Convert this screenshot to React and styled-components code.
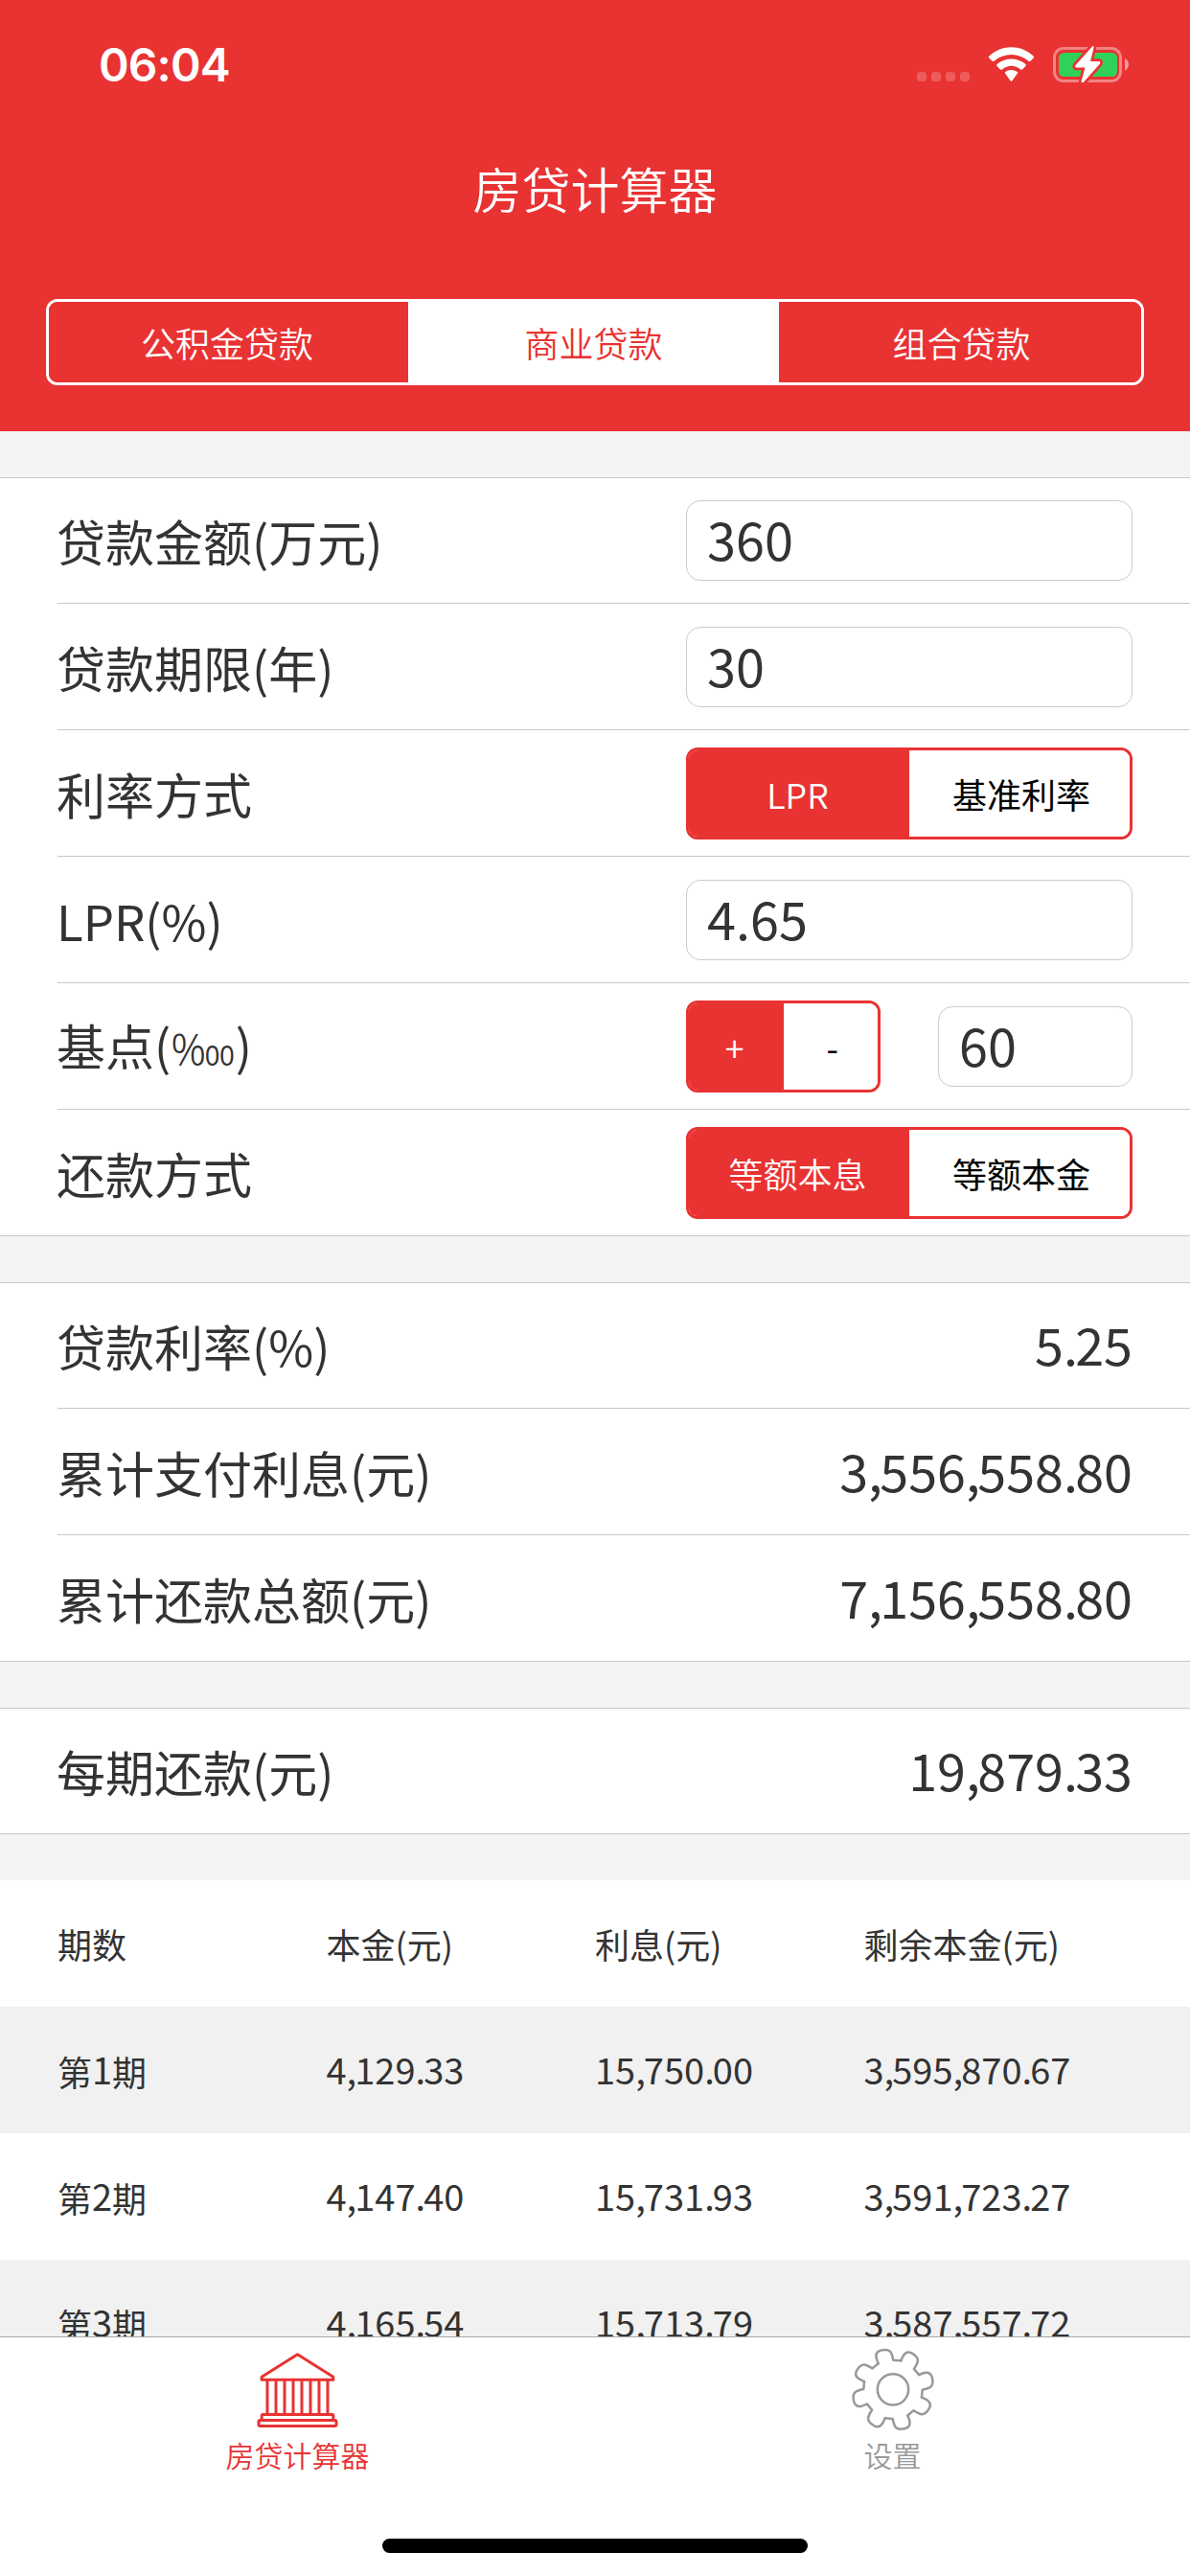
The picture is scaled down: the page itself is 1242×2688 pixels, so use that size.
import React, { useState } from "react";
import styled, { createGlobalStyle } from "styled-components";

const RED = "#e93232";
const LINE = "#c8c8c8";

const GlobalStyle = createGlobalStyle`
  * {
    box-sizing: border-box;
  }
  body {
    margin: 0;
    background: white;
    color: #333;
    font-family: "Noto Sans CJK SC", "Noto Sans", sans-serif;
  }
`;

const Screen = styled.div`
  display: flex;
  flex-direction: column;
  width: 1242px;
  height: 2688px;
  overflow: hidden;
  background: #f4f4f4;
`;
const Header = styled.header`
  display: flex;
  flex-direction: column;
  flex: none;
  height: 450px;
  padding: 0 48px;
  background: ${RED};
  color: white;
`;
const StatusBar = styled.div`
  display: flex;
  justify-content: space-between;
  height: 130px;
  padding: 38px 15px 0 55px;

  & svg {
    margin-top: 4px;
  }
`;
const Time = styled.span`
  font-family: Inter, sans-serif;
  font-size: 48px;
  font-weight: 600;
  line-height: 60px;
  letter-spacing: -0.9px;
`;
const Title = styled.h1`
  margin: 0;
  height: 132px;
  font-size: 51px;
  font-weight: 350;
  line-height: 132px;
  text-align: center;
`;
const LoanTabs = styled.div`
  display: grid;
  grid-template-columns: 375px 387px 1fr;
  height: 90px;
  margin-top: 50px;
  border: 3px solid white;
  border-radius: 12px;
  overflow: hidden;
`;
const LoanTab = styled.button`
  border: 0;
  padding: 0;
  font-family: inherit;
  font-size: 36px;
  font-weight: 350;
  line-height: 84px;
  color: ${(props) => (props.$active ? RED : "white")};
  background: ${(props) => (props.$active ? "white" : RED)};

  &:first-child {
    padding-right: 3px;
  }
  &:last-child {
    padding-left: 3px;
  }
`;
const Content = styled.main`
  flex: 1;
  min-height: 0;
  overflow: hidden;
`;
const Section = styled.section`
  margin-top: 48px;
  padding-left: 60px;
  background: white;
  border-top: 1px solid ${LINE};
  border-bottom: 1px solid ${LINE};
`;
const Row = styled.div`
  display: flex;
  align-items: center;
  justify-content: space-between;
  height: 132px;
  padding-right: 60px;
  border-bottom: 1px solid ${LINE};

  &:first-child {
    height: 131px;
  }
  &:last-child {
    border-bottom: 0;
    height: 131px;
  }
  &:only-child {
    height: 130px;
  }
`;
const Label = styled.span`
  margin-left: -1px;
  font-size: 51px;
  line-height: 76px;
  white-space: nowrap;
`;
const PerMyriad = styled.span`
  font-size: 45px;
  font-weight: 350;
`;
const Value = styled.span`
  font-size: 51px;
  line-height: 76px;
`;
const Controls = styled.div`
  display: grid;
  grid-auto-flow: column;
  grid-auto-columns: minmax(0, 1fr);
  align-items: center;
  gap: 60px;
  width: 466px;
`;
const Input = styled.input`
  width: 100%;
  height: 84px;
  padding: 0 21px 5px;
  border: 1px solid #ccc;
  border-radius: 15px;
  outline: none;
  background: white;
  color: #333;
  font-family: inherit;
  font-size: 54px;
`;
const Segmented = styled.div`
  display: grid;
  grid-template-columns: 1fr 1fr;
  height: 96px;
  border: 3px solid ${RED};
  border-radius: 12px;
  overflow: hidden;
`;
const Segment = styled.button`
  border: 0;
  padding: 0;
  font-family: inherit;
  font-size: 36px;
  font-weight: ${(props) => (props.$active ? 350 : 400)};
  line-height: 90px;
  color: ${(props) => (props.$active ? "white" : "black")};
  background: ${(props) => (props.$active ? RED : "white")};

  &:first-child {
    padding-right: 3px;
  }
  &:last-child {
    padding-left: 4px;
  }
`;
const Digits = styled.span`
  font-size: 1.056em;
  vertical-align: 0.04em;
`;
const Mark = styled.span`
  letter-spacing: -0.05em;
`;
const Table = styled.div`
  margin-top: 48px;
`;
const TableRow = styled.div`
  display: grid;
  grid-template-columns: repeat(4, 1fr);
  align-items: center;
  height: 132px;
  padding: 0 60px;
  background: ${(props) => (props.$striped ? "#f1f1f1" : "white")};
  font-size: 36px;
  line-height: 54px;
  white-space: nowrap;
`;
const TabBar = styled.nav`
  display: flex;
  flex: none;
  flex-direction: column;
  align-items: center;
  height: 250px;
  background: white;
  border-top: 1px solid #a9a9a9;
`;
const TabList = styled.div`
  display: grid;
  grid-template-columns: 1fr 1fr;
  width: 100%;
  padding-top: 10px;
`;
const TabItem = styled.div`
  display: flex;
  flex-direction: column;
  align-items: center;
  color: ${(props) => (props.$active ? RED : "#999")};
  font-size: 30px;
  font-weight: 350;
  line-height: 44px;

  & svg {
    display: block;
  }
`;
const HomeIndicator = styled.div`
  width: 444px;
  height: 15px;
  margin-top: auto;
  margin-bottom: 24px;
  border-radius: 8px;
  background: black;
`;

// Digits are set a little larger than the Chinese text, with tight separators
const Num = ({ children }) => (
  <Digits>
    {String(children)
      .split(/([.,])/)
      .map((part, i) =>
        part === "." || part === "," ? <Mark key={i}>{part}</Mark> : part
      )}
  </Digits>
);

const StatusIcons = () => (
  <svg width="225" height="50" viewBox="954 42 225 50">
    {[957, 972, 987, 1002].map((x) => (
      <rect key={x} x={x} y="75" width="10" height="10" rx="3.3" fill="white" opacity="0.2" />
    ))}
    <g fill="white">
      <path d="M1032.3 58.6 C1045.5 46 1065.5 46 1078.7 58.6 Q1079.6 59.6 1078.7 60.5 L1075.4 63.7 Q1074.5 64.6 1073.5 63.7 C1063 54.6 1048 54.6 1037.5 63.7 Q1036.5 64.6 1035.6 63.7 L1032.3 60.5 Q1031.4 59.6 1032.3 58.6Z" />
      <path d="M1040.6 67 C1049 59.6 1062 59.6 1070.4 67 Q1071.4 68 1070.4 69 L1067 72.4 Q1066 73.3 1065 72.4 C1059.5 67.6 1051.5 67.6 1046 72.4 Q1045 73.3 1044 72.4 L1040.6 69 Q1039.6 68 1040.6 67Z" />
      <path d="M1049 76.6 Q1048.2 75.7 1049.2 75 C1053 72.2 1058 72.2 1061.8 75 Q1062.8 75.7 1062 76.6 L1056.4 84.2 Q1055.5 85.2 1054.6 84.2Z" />
    </g>
    <rect x="1100.5" y="50.5" width="69" height="34" rx="9.5" fill="none" stroke="white" strokeOpacity="0.4" strokeWidth="3" />
    <path d="M1174 61 C1179.2 63 1179.2 71.4 1174 73.4Z" fill="white" fillOpacity="0.5" />
    <rect x="1105" y="55" width="61" height="25" rx="5.5" fill="#30d158" />
    <path
      d="M1140 48.4 L1122.3 68.3 Q1121.4 70.3 1123.5 70.6 H1132.5 L1128.6 84.8 Q1128.8 87.4 1131.2 85.6 L1148 66.4 Q1149 64.3 1147 64 H1138 L1141.7 49.6 Q1141.6 47.2 1140 48.4Z"
      fill="white"
      stroke={RED}
      strokeWidth="5.5"
      strokeLinejoin="round"
      paintOrder="stroke"
    />
  </svg>
);

const BankIcon = () => (
  <svg width="87" height="90" viewBox="199.5 87 261 270" fill="none" stroke="currentColor" strokeWidth="9" strokeLinejoin="round">
    <path d="M330 110 L218 181 V190 H442 V181 Z" />
    {[235.5, 262.5, 289.5, 316.5, 343.5, 370.5, 397.5, 424.5].map((x) => (
      <path key={x} d={`M${x} 190V298`} />
    ))}
    <path d="M218 317V303Q218 298.5 222 298.5H438Q442 298.5 442 303V317" />
    <rect x="208.5" y="316.5" width="243" height="18" rx="5" />
  </svg>
);

const GearIcon = () => (
  <svg width="90" height="90" viewBox="-135 -133 270 270" fill="none" stroke="currentColor" strokeWidth="7.5" strokeLinecap="round" strokeLinejoin="round">
    <circle r="48.5" />
    {[0, 45, 90, 135, 180, 225, 270, 315].map((angle) => (
      <path
        key={angle}
        transform={`rotate(${angle})`}
        d="M-46 -81 L-52 -98 C-55 -112 -49 -119 -39 -122 C-28 -125 -16 -126 -9 -119 C-6 -116 -2 -106 1 -92 L25 -90"
      />
    ))}
  </svg>
);

const loanTypes = ["公积金贷款", "商业贷款", "组合贷款"];
const schedule = [
  ["1", "4,129.33", "15,750.00", "3,595,870.67"],
  ["2", "4,147.40", "15,731.93", "3,591,723.27"],
  ["3", "4,165.54", "15,713.79", "3,587,557.72"],
];

const Toggle = ({ options }) => {
  const [selected, setSelected] = useState(0);
  return (
    <Segmented>
      {options.map((option, i) => (
        <Segment key={option} $active={i === selected} onClick={() => setSelected(i)}>
          {option}
        </Segment>
      ))}
    </Segmented>
  );
};

const Field = ({ label, children }) => (
  <Row>
    <Label>{label}</Label>
    <Controls>{children}</Controls>
  </Row>
);

const Result = ({ label, value }) => (
  <Row>
    <Label>{label}</Label>
    <Value>
      <Num>{value}</Num>
    </Value>
  </Row>
);

const App = () => {
  const [loanType, setLoanType] = useState(1);
  return (
    <Screen>
      <GlobalStyle />
      <Header>
        <StatusBar>
          <Time>06:04</Time>
          <StatusIcons />
        </StatusBar>
        <Title>房贷计算器</Title>
        <LoanTabs>
          {loanTypes.map((name, i) => (
            <LoanTab key={name} $active={i === loanType} onClick={() => setLoanType(i)}>
              {name}
            </LoanTab>
          ))}
        </LoanTabs>
      </Header>
      <Content>
        <Section>
          <Field label="贷款金额(万元)">
            <Input defaultValue="360" />
          </Field>
          <Field label="贷款期限(年)">
            <Input defaultValue="30" />
          </Field>
          <Field label="利率方式">
            <Toggle options={["LPR", "基准利率"]} />
          </Field>
          <Field label="LPR(%)">
            <Input defaultValue="4.65" />
          </Field>
          <Field label={<>基点(<PerMyriad>‱</PerMyriad>)</>}>
            <Toggle options={["+", "-"]} />
            <Input defaultValue="60" />
          </Field>
          <Field label="还款方式">
            <Toggle options={["等额本息", "等额本金"]} />
          </Field>
        </Section>
        <Section>
          <Result label="贷款利率(%)" value="5.25" />
          <Result label="累计支付利息(元)" value="3,556,558.80" />
          <Result label="累计还款总额(元)" value="7,156,558.80" />
        </Section>
        <Section>
          <Result label="每期还款(元)" value="19,879.33" />
        </Section>
        <Table>
          <TableRow>
            <span>期数</span>
            <span>本金(元)</span>
            <span>利息(元)</span>
            <span>剩余本金(元)</span>
          </TableRow>
          {schedule.map(([period, ...amounts], i) => (
            <TableRow key={period} $striped={i % 2 === 0}>
              <span>
                第<Num>{period}</Num>期
              </span>
              {amounts.map((amount) => (
                <span key={amount}>
                  <Num>{amount}</Num>
                </span>
              ))}
            </TableRow>
          ))}
        </Table>
      </Content>
      <TabBar>
        <TabList>
          <TabItem $active>
            <BankIcon />
            房贷计算器
          </TabItem>
          <TabItem>
            <GearIcon />
            设置
          </TabItem>
        </TabList>
        <HomeIndicator />
      </TabBar>
    </Screen>
  );
};

export default App;
